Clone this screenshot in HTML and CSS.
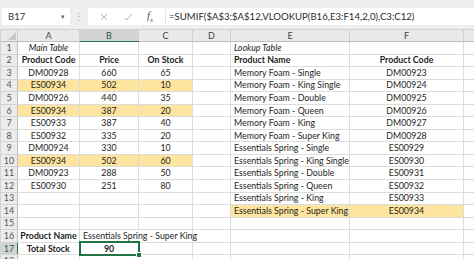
FILE: index.html
```html
<!DOCTYPE html>
<html lang="en">
<head>
    <meta charset="UTF-8">
    <meta name="viewport" content="width=device-width, initial-scale=1.0">
    <title>Total Stock - SUMIF VLOOKUP</title>
    <link rel="stylesheet" href="styles.css">
</head>
<body>
    <div class="toolbar">
        <div class="name-box">
            <span>B17</span>
            <span class="drop">&#9662;</span>
        </div>
        <div class="dots">&#8942;</div>
        <div class="formula-box">
            <svg class="fb-icon" width="10" height="10" viewBox="0 0 10 10"><path d="M2 2L8 8M8 2L2 8" stroke="#b5b5b5" stroke-width="1" fill="none"/></svg>
            <svg class="fb-icon" width="10" height="10" viewBox="0 0 10 10"><path d="M1.5 5.5L4 8L8.5 2" stroke="#b5b5b5" stroke-width="1" fill="none"/></svg>
            <span class="fx">f<sub>x</sub></span>
            <span class="formula">=SUMIF($A$3:$A$12,VLOOKUP(B16,E3:F14,2,0),C3:C12)</span>
        </div>
    </div>

    <table class="sheet">
        <colgroup>
            <col class="c-rh"><col class="c-a"><col class="c-b"><col class="c-c"><col class="c-d"><col class="c-e"><col class="c-f"><col class="c-g">
        </colgroup>
        <tr class="col-heads">
            <th class="corner"><svg width="8" height="8" viewBox="0 0 8 8"><path d="M8 0V8H0Z" fill="#c8c8c8"/></svg></th>
            <th>A</th><th class="active">B</th><th>C</th><th>D</th><th>E</th><th>F</th><th></th>
        </tr>
        <tr><td class="rh">1</td><td class="center italic">Main Table</td><td></td><td></td><td></td><td class="italic">Lookup Table</td><td></td><td></td></tr>
        <tr><td class="rh">2</td><td class="center bold">Product Code</td><td class="center bold">Price</td><td class="center bold">On Stock</td><td></td><td class="bold">Product Name</td><td class="center bold">Product Code</td><td></td></tr>
        <tr><td class="rh">3</td><td class="center">DM00928</td><td class="center">660</td><td class="center">65</td><td></td><td>Memory Foam - Single</td><td class="center">DM00923</td><td></td></tr>
        <tr><td class="rh">4</td><td class="center hl">ES00934</td><td class="center hl">502</td><td class="center hl">10</td><td></td><td>Memory Foam - King Single</td><td class="center">DM00924</td><td></td></tr>
        <tr><td class="rh">5</td><td class="center">DM00926</td><td class="center">440</td><td class="center">35</td><td></td><td>Memory Foam - Double</td><td class="center">DM00925</td><td></td></tr>
        <tr><td class="rh">6</td><td class="center hl">ES00934</td><td class="center hl">387</td><td class="center hl">20</td><td></td><td>Memory Foam - Queen</td><td class="center">DM00926</td><td></td></tr>
        <tr><td class="rh">7</td><td class="center">ES00933</td><td class="center">387</td><td class="center">40</td><td></td><td>Memory Foam - King</td><td class="center">DM00927</td><td></td></tr>
        <tr><td class="rh">8</td><td class="center">ES00932</td><td class="center">335</td><td class="center">20</td><td></td><td>Memory Foam - Super King</td><td class="center">DM00928</td><td></td></tr>
        <tr><td class="rh">9</td><td class="center">DM00924</td><td class="center">330</td><td class="center">10</td><td></td><td>Essentials Spring - Single</td><td class="center">ES00929</td><td></td></tr>
        <tr><td class="rh">10</td><td class="center hl">ES00934</td><td class="center hl">502</td><td class="center hl">60</td><td></td><td>Essentials Spring - King Single</td><td class="center">ES00930</td><td></td></tr>
        <tr><td class="rh">11</td><td class="center">DM00923</td><td class="center">288</td><td class="center">50</td><td></td><td>Essentials Spring - Double</td><td class="center">ES00931</td><td></td></tr>
        <tr><td class="rh">12</td><td class="center">ES00930</td><td class="center">251</td><td class="center">80</td><td></td><td>Essentials Spring - Queen</td><td class="center">ES00932</td><td></td></tr>
        <tr><td class="rh">13</td><td></td><td></td><td></td><td></td><td>Essentials Spring - King</td><td class="center">ES00933</td><td></td></tr>
        <tr><td class="rh">14</td><td></td><td></td><td></td><td></td><td class="hl">Essentials Spring - Super King</td><td class="center hl">ES00934</td><td></td></tr>
        <tr><td class="rh">15</td><td></td><td></td><td></td><td></td><td></td><td></td><td></td></tr>
        <tr><td class="rh">16</td><td class="center bold">Product Name</td><td colspan="2">Essentials Spring - Super King</td><td></td><td></td><td></td><td></td></tr>
        <tr><td class="rh active">17</td><td class="center bold">Total Stock</td><td class="center bold selected">90</td><td></td><td></td><td></td><td></td><td></td></tr>
        <tr><td class="rh">18</td><td></td><td></td><td></td><td></td><td></td><td></td><td></td></tr>
    </table>
</body>
</html>
```

FILE: styles.css
```css
body {
    margin: 0;
    background-color: #ffffff;
    font-family: 'Lato', 'Liberation Sans', sans-serif;
    color: #1e1e1e;
    overflow: hidden;
}

/* formula bar */
.toolbar {
    height: 29px;
    background-color: #eeeeee;
    display: flex;
    align-items: flex-start;
    padding-top: 8px;
    box-sizing: border-box;
}

.name-box {
    margin-left: 2px;
    width: 68px;
    height: 17px;
    background-color: #ffffff;
    display: flex;
    align-items: center;
    justify-content: space-between;
    padding: 0 5px 0 6px;
    box-sizing: border-box;
    font-size: 9.5px;
    color: #333333;
}

.name-box .drop {
    font-size: 7px;
    color: #666666;
}

.dots {
    width: 18px;
    height: 17px;
    text-align: center;
    line-height: 17px;
    font-size: 10px;
    color: #a8a8a8;
}

.formula-box {
    flex: 1;
    height: 17px;
    background-color: #ffffff;
    display: flex;
    align-items: center;
    padding-left: 11px;
    font-size: 9.6px;
    color: #2a2a2a;
}

.fb-icon {
    margin-right: 14px;
}

.fx {
    font-family: 'Liberation Serif', serif;
    font-style: italic;
    font-size: 11px;
    color: #555555;
    width: 16px;
    margin-left: 0;
}

.fx sub {
    font-size: 7px;
}

.formula {
    margin-left: 2px;
    padding-left: 3px;
    border-left: 1px solid #e4e4e4;
    line-height: 15px;
}

/* grid */
.sheet {
    border-collapse: collapse;
    table-layout: fixed;
    width: 480px;
    font-size: 8.8px;
}

.c-rh { width: 17px; }
.c-a { width: 62px; }
.c-b { width: 59px; }
.c-c { width: 54px; }
.c-d { width: 38px; }
.c-e { width: 119px; }
.c-f { width: 114px; }
.c-g { width: 17px; }

.sheet tr {
    height: 12.56px;
}

.sheet tr.col-heads {
    height: 12px;
}

.sheet th,
.sheet td {
    padding: 0 0 0 3px;
    border: 1px solid #dcdcdc;
    white-space: nowrap;
    overflow: visible;
    line-height: 10px;
    text-align: left;
}

.col-heads th {
    background-color: #e9e9e9;
    border-color: #d0d0d0;
    border-bottom-color: #bdbdbd;
    font-weight: normal;
    color: #444444;
    font-size: 9px;
    text-align: center;
    padding: 0;
}

.col-heads th.active {
    background-color: #d3d3d3;
    border-bottom: 1px solid #217346;
    color: #2b5d3a;
}

.col-heads .corner {
    text-align: right;
    vertical-align: bottom;
    line-height: 0;
}

.corner svg {
    margin: 0 1px 1px 0;
}

.sheet td.rh {
    background-color: #ececec;
    border-color: #d3d3d3;
    border-right-color: #bdbdbd;
    color: #555555;
    text-align: center;
    padding: 0;
    font-size: 9px;
}

.sheet td.rh.active {
    background-color: #d3d3d3;
    border-right: 1px solid #217346;
    color: #2b5d3a;
}

.sheet td.center {
    text-align: center;
    padding: 0;
}

.bold {
    font-weight: bold;
}

.italic {
    font-style: italic;
}

.sheet td.hl {
    background-color: #fde59f;
}

.sheet td.selected {
    border: 2px solid #217346;
    position: relative;
}

.sheet td.selected::after {
    content: '';
    position: absolute;
    right: -4px;
    bottom: -4px;
    width: 4px;
    height: 4px;
    background-color: #217346;
    border: 1px solid #ffffff;
}
```
